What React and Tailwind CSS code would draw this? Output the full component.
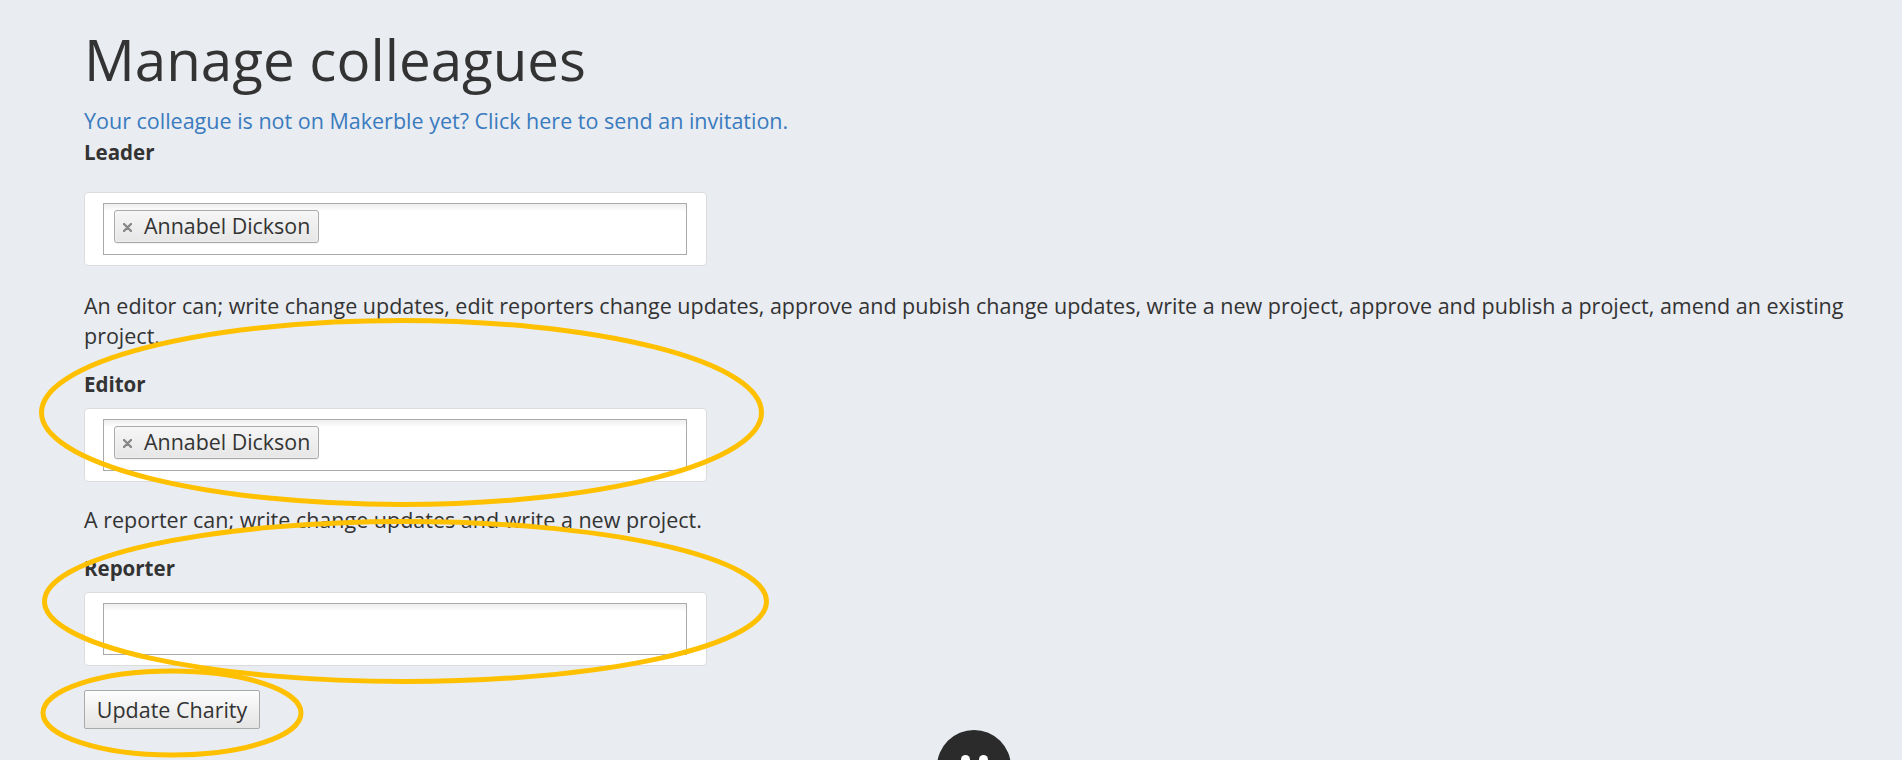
import React from 'react'

const FONT = '"Open Sans", "Noto Sans", sans-serif'

function Tag({ name }) {
  return (
    <span className="inline-flex items-center h-[33px] pl-[8px] pr-[8px] border border-[#aaa] rounded-[3px] bg-gradient-to-b from-[#f6f6f6] to-[#e6e6e6] shadow-[0_0_2px_#fff_inset,0_1px_0_rgba(0,0,0,0.05)]">
      <svg width="9" height="9" viewBox="0 0 9 9" className="mt-[3px] mr-[12px] shrink-0">
        <path d="M1 1L8 8M8 1L1 8" stroke="#888" strokeWidth="2.4" strokeLinecap="round" />
      </svg>
      <span className="text-[21.4px] text-[#333] leading-none">{name}</span>
    </span>
  )
}

function PickerBox({ tag }) {
  return (
    <div className="w-[623px] bg-white border border-[#dcdcdc] rounded-[4px] pl-[18px] pr-[19px] pt-[10px] pb-[10px]">
      <div className="h-[52px] border border-[#aaa] bg-gradient-to-b from-[#eee] from-0% to-white to-[15%] pl-[10px] pt-[5px]">
        {tag && <Tag name={tag} />}
      </div>
    </div>
  )
}

export default function App() {
  return (
    <div className="relative w-full h-[760px] overflow-hidden bg-[#e9ecf1] text-[#333]" style={{ fontFamily: FONT }}>
      <div className="pl-[84px] pr-[36px] pt-[27px] text-[21.5px] leading-[30px]">
        <h1 className="text-[56.5px] leading-[66px] font-normal">Manage colleagues</h1>
        <a href="#" className="block mt-[13px] text-[#3a7bbf]">
          Your colleague is not on Makerble yet? Click here to send an invitation.
        </a>
        <div className="mt-[1px] font-bold text-[20.5px]">Leader</div>
        <div className="mt-[25px]">
          <PickerBox tag="Annabel Dickson" />
        </div>
        <p className="mt-[25px]">
          An editor can; write change updates, edit reporters change updates, approve and pubish change updates, write a new project, approve and publish a project, amend an existing project.
        </p>
        <div className="mt-[18px] font-bold text-[20.5px]">Editor</div>
        <div className="mt-[9px]">
          <PickerBox tag="Annabel Dickson" />
        </div>
        <p className="mt-[23px]">A reporter can; write change updates and write a new project.</p>
        <div className="mt-[18px] font-bold text-[20.5px]">Reporter</div>
        <div className="mt-[9px]">
          <PickerBox />
        </div>
        <button className="mt-[24px] h-[39px] w-[176px] border border-[#aaa] rounded-[2px] bg-gradient-to-b from-[#fdfdfd] to-[#e4e4e4] text-[21.5px] leading-none text-[#333]">
          Update Charity
        </button>
      </div>

      <svg className="absolute inset-0 pointer-events-none" width="1902" height="760">
        <ellipse cx="401.5" cy="412.5" rx="360" ry="92" fill="none" stroke="#ffc000" strokeWidth="5" />
        <ellipse cx="405.5" cy="601.5" rx="361" ry="80" fill="none" stroke="#ffc000" strokeWidth="5" />
        <ellipse cx="172" cy="713" rx="129" ry="42" fill="none" stroke="#ffc000" strokeWidth="5" />
      </svg>

      <div className="absolute left-[937px] top-[730px] w-[74px] h-[74px] rounded-full bg-[#2b2b2b]">
        <span className="absolute left-[24px] top-[25px] w-[9px] h-[9px] rounded-full bg-white" />
        <span className="absolute left-[42px] top-[25px] w-[9px] h-[9px] rounded-full bg-white" />
      </div>
    </div>
  )
}
